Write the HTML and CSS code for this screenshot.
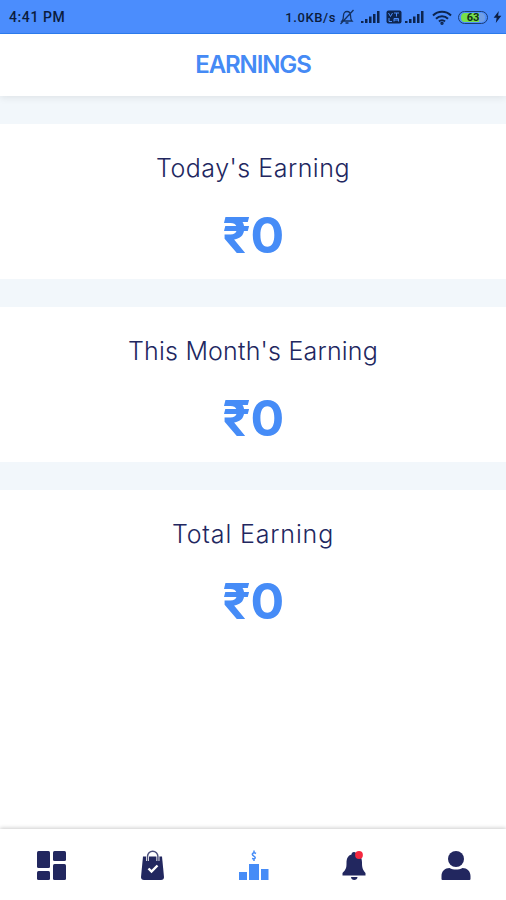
FILE: index.html
```
<!DOCTYPE html>
<html lang="en">
<head>
    <meta charset="UTF-8">
    <meta name="viewport" content="width=device-width, initial-scale=1.0">
    <title>Earnings</title>
    <link rel="stylesheet" href="styles.css">
</head>
<body>
    <div class="status-bar">
        <span class="time">4:41 PM</span>
        <div class="status-icons">
            <span class="speed">1.0KB/s</span>
            <svg class="mute" width="16" height="16" viewBox="0 0 16 16" fill="none" stroke="#14305f" stroke-width="1.3">
                <path d="M3 12c1.5-1.5 1.5-3 1.5-5.500C4.500 4 6 2.500 8 2.500S11.500 4 11.500 6.500c0 2.500 0 4 1.500 5.500zM6.500 14h3M1.500 15L14.500 1"/>
            </svg>
            <svg class="signal" width="19" height="14" viewBox="0 0 19 14" fill="#0d254f">
                <path d="M0 11h2.500v2H0zM4 9h2.500v4H4zM8 6.500h2.500V13H8zM12 4h2.500v9H12zM16 1h2.500v12H16z"/>
            </svg>
            <svg class="volte" width="16" height="14" viewBox="0 0 16 14">
                <rect x="0.500" y="0.500" width="15" height="13" rx="2" fill="#0d254f"/>
                <path d="M2.500 3l2 3.500 2-3.500M8 3h5M10.500 3v3.500M3 8v3.500h3M8 11.500V8.500h4.500v3M8 10h4" fill="none" stroke="#4b8dfb"/>
            </svg>
            <svg class="signal" width="19" height="14" viewBox="0 0 19 14" fill="#0d254f">
                <path d="M0 11h2.500v2H0zM4 9h2.500v4H4zM8 6.500h2.500V13H8zM12 4h2.500v9H12zM16 1h2.500v12H16z"/>
            </svg>
            <svg class="wifi" width="20" height="15" viewBox="0 0 20 15" fill="none" stroke="#0d254f" stroke-width="2">
                <path d="M1 5.500c5-5 13-5 18 0M4 8.700c3.300-3.300 8.700-3.300 12 0M7 11.500c1.700-1.700 4.300-1.700 6 0"/>
                <circle cx="10" cy="13.300" r="0.700"/>
            </svg>
            <div class="battery"><span>63</span></div>
            <svg class="bolt" width="9" height="12" viewBox="0 0 9 14" fill="#0d1f45">
                <path d="M6 0L0 8h3.500L2.500 14 9 5.500H5.200z"/>
            </svg>
        </div>
    </div>

    <div class="header">
        <h1>EARNINGS</h1>
    </div>

    <div class="content">
        <div class="card">
            <h2 class="today">Today's Earning</h2>
            <p class="amount">₹0</p>
        </div>
        <div class="card">
            <h2 class="month">This Month's Earning</h2>
            <p class="amount">₹0</p>
        </div>
        <div class="card last">
            <h2 class="total">Total Earning</h2>
            <p class="amount">₹0</p>
        </div>
    </div>

    <div class="bottom-nav">
        <a class="nav-item">
            <svg width="32" height="32" viewBox="0 0 32 32" fill="#22275f">
                <rect x="2" y="2" width="13" height="17" rx="1.500"/>
                <rect x="18" y="2" width="13" height="10" rx="1.500"/>
                <rect x="2" y="22" width="13" height="9" rx="1.500"/>
                <rect x="18" y="15" width="13" height="16" rx="1.500"/>
            </svg>
        </a>
        <a class="nav-item">
            <svg width="32" height="32" viewBox="0 0 32 32">
                <path d="M7 7.500h19l2 20.500q0 3-3 3H8q-3 0-3-3z" fill="#22275f"/>
                <path d="M11.500 12V7.500a5.200 5.200 0 0 1 10.400 0V12" fill="none" stroke="#fff" stroke-width="3"/>
                <path d="M11.500 12V7.500a5.200 5.200 0 0 1 10.400 0V12" fill="none" stroke="#4b4f7c" stroke-width="1.500"/>
                <path d="M12.500 19.500l3 3 6-6" fill="none" stroke="#fff" stroke-width="2.400"/>
            </svg>
        </a>
        <a class="nav-item active">
            <svg width="32" height="32" viewBox="0 0 32 32" fill="#468cf7">
                <path d="M2 23h8v8H2zM12 15h10v16H12zM24 20h7.500v11H24z"/>
                <path d="M19 4.500c-3-1.800-5 .8-2.500 2.300s2.500 3.700-1.500 2.700M17 1.500v2M17 10v2" fill="none" stroke="#468cf7" stroke-width="1.500"/>
            </svg>
        </a>
        <a class="nav-item">
            <svg width="32" height="32" viewBox="0 0 32 32" fill="#22275f">
                <path d="M16 3c2 0 2 1.500 2.500 2 4 1.500 5.500 4 5.500 8.500 0 5 .5 7 3.500 10.500v2.500h-23V24C8 20.500 8.500 19 8.500 14c0-4.500 1.500-7.500 5-8.500 0-1 .5-2.500 2.500-2.500zM13 28h6.500c0 4-6.500 4-6.500 0z"/>
                <circle cx="21" cy="6" r="3.900" fill="#f5283f"/>
            </svg>
        </a>
        <a class="nav-item">
            <svg width="32" height="32" viewBox="0 0 32 32" fill="#22275f">
                <circle cx="17" cy="10" r="8"/>
                <path d="M2.500 30v-3c0-5 3.500-8 8-8 4 2 9 2 13 0 4.500 0 8 3 8 8v3q0 1-1 1h-27q-1 0-1-1z"/>
            </svg>
        </a>
    </div>
</body>
</html>
```
FILE: styles.css
```
* {
    box-sizing: border-box;
}

body {
    margin: 0;
    height: 900px;
    display: flex;
    flex-direction: column;
    overflow: hidden;
    background-color: #fff;
    font-family: Inter, "Noto Sans", sans-serif;
    color: #22275f;
}

.status-bar {
    height: 34px;
    padding: 1px 4px 0 9px;
    display: flex;
    align-items: center;
    justify-content: space-between;
    background-color: #4b8dfd;
    border-bottom: 1px solid #2c7df0;
    color: #0b1c3d;
    font-family: Roboto, sans-serif;
}

.time {
    font-size: 14px;
    font-weight: 500;
    letter-spacing: 0.6px;
}

.status-icons {
    display: flex;
    align-items: center;
}

.speed {
    font-size: 13px;
    font-weight: 500;
    letter-spacing: 0.6px;
    margin-right: 3px;
}

.mute {
    margin-right: 6px;
}

.volte {
    margin: 0 3px 0 6px;
}

.wifi {
    margin: 0 6px 0 8px;
}

.battery {
    width: 30px;
    height: 13px;
    border: 1.5px solid #1c3c74;
    border-radius: 7px;
    padding: 1px 2px;
    background: linear-gradient(to right, #77df4d 74%, #719fe6 74%) content-box;
    font-size: 11px;
    font-weight: 700;
    line-height: 10px;
    text-align: center;
    color: #123018;
}

.bolt {
    margin-left: 5px;
}

/* Title bar */
.header {
    height: 62px;
    position: relative;
    background-color: #fff;
    box-shadow: 0 2px 7px rgba(0, 0, 0, 0.08);
    text-align: center;
}

h1 {
    margin: 0;
    font-size: 24px;
    font-weight: 600;
    line-height: 62px;
    letter-spacing: -1.1px;
    color: #458af5;
}

/* Earnings cards */
.content {
    flex: 1;
    display: flex;
    flex-direction: column;
    gap: 28px;
    padding-top: 28px;
    background-color: #f2f7fb;
}

.card {
    height: 155px;
    padding-top: 28px;
    background-color: #fff;
    text-align: center;
}

.last {
    height: auto;
    flex: 1;
}

h2 {
    margin: 0;
    font-size: 25px;
    font-weight: 300;
    line-height: 32px;
}

.today {
    letter-spacing: 0.5px;
}

.month {
    letter-spacing: 0.2px;
}

.total {
    letter-spacing: 0.85px;
}

.amount {
    margin: 19px 0 0;
    font-size: 50px;
    font-weight: 700;
    line-height: 64px;
    letter-spacing: -0.5px;
    color: #468cf7;
}

/* Bottom navigation */
.bottom-nav {
    height: 71px;
    position: relative;
    display: flex;
    background-color: #fff;
    box-shadow: 0 -1px 4px rgba(0, 0, 0, 0.2);
}

.nav-item {
    flex: 1;
    padding-top: 20px;
    text-align: center;
}
```
